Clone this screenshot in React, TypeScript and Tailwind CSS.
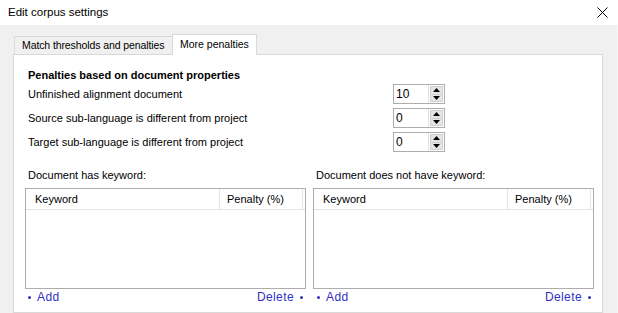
import React from "react";

function Spinner({ value }: { value: string }) {
  return (
    <div className="flex h-[20px] w-[52px] border border-[#adadad] bg-white">
      <div className="flex-1 pl-[2px] text-[12px] leading-[18px] text-black">{value}</div>
      <div className="flex w-[16px] flex-col border-l border-[#e0e0e0] p-[1px]">
        <div className="flex flex-1 items-center justify-center border border-[#d0d0d0] bg-[#e5e5e5]">
          <svg width="7" height="4" viewBox="0 0 7 4">
            <path d="M3.5 0 L7 4 L0 4 Z" fill="#000" />
          </svg>
        </div>
        <div className="flex flex-1 items-center justify-center border border-t-0 border-[#d0d0d0] bg-[#e5e5e5]">
          <svg width="7" height="4" viewBox="0 0 7 4">
            <path d="M0 0 L7 0 L3.5 4 Z" fill="#000" />
          </svg>
        </div>
      </div>
    </div>
  );
}

function KeywordList({ label, addPl }: { label: string; addPl: string }) {
  return (
    <div className="flex w-[281px] flex-col">
      <div className="ml-[3px] mt-[14px] h-[14px] whitespace-nowrap text-[11px] leading-[14px] text-black">{label}</div>
      <div className="mt-[6px] h-[101px] border border-[#adadad] bg-white">
        <div className="flex h-[21px] border-b border-[#e5e5e5] text-[11px] leading-[20px] text-black">
          <div className="w-[194px] border-r border-[#e5e5e5] pl-[9px]">Keyword</div>
          <div className="w-[83px] whitespace-nowrap border-r border-[#e5e5e5] pl-[7px]">Penalty (%)</div>
        </div>
      </div>
      <div className={`mt-[1px] flex h-[14px] items-center justify-between pr-[3px] text-[12px] tracking-[0.4px] text-[#3030c8] ${addPl}`}>
        <div className="flex items-center gap-[6px]">
          <span className="h-[3px] w-[3px] rounded-full bg-[#3030c8]" />
          <span>Add</span>
        </div>
        <div className="flex items-center gap-[6px]">
          <span>Delete</span>
          <span className="h-[3px] w-[3px] rounded-full bg-[#3030c8]" />
        </div>
      </div>
    </div>
  );
}

export default function App() {
  const rows = [
    ["Unfinished alignment document", "10"],
    ["Source sub-language is different from project", "0"],
    ["Target sub-language is different from project", "0"],
  ];
  return (
    <div
      className="flex h-[313px] w-[618px] flex-col overflow-hidden"
      style={{ fontFamily: '"Liberation Sans", Arial, sans-serif' }}
    >
      <div className="flex h-[25px] items-center justify-between bg-white pl-[8px] pr-[10px]">
        <span className="pt-[1px] text-[11.5px] text-black">Edit corpus settings</span>
        <svg width="11" height="11" viewBox="0 0 11 11">
          <path d="M0.5 0.5 L10.5 10.5 M10.5 0.5 L0.5 10.5" stroke="#000" strokeWidth="1" />
        </svg>
      </div>
      <div className="flex flex-1 flex-col border-r border-[#f8f8f8] bg-[#f0f0f0] pl-[13px] pr-[14px] pt-[9px]">
        <div className="flex h-[20px] items-end pl-[1px]">
          <div className="flex h-[18px] w-[158px] items-center overflow-hidden whitespace-nowrap border-l border-t border-[#d9d9d9] pl-[7px] text-[10.5px] tracking-[-0.1px] text-black">
            Match thresholds and penalties
          </div>
          <div className="relative z-10 -mb-[1px] flex h-[21px] w-[85px] items-center whitespace-nowrap border-l border-r border-t border-[#d9d9d9] bg-white pb-[1px] pl-[7px] text-[10.5px] text-black">
            More penalties
          </div>
        </div>
        <div className="flex-1 border border-[#d9d9d9] bg-white pl-[11px]">
          <div className="ml-[3px] mt-[13px] h-[14px] text-[11px] font-bold leading-[14px] text-black">
            Penalties based on document properties
          </div>
          {rows.map(([label, value]) => (
            <div key={label} className="ml-[3px] flex h-[24px] items-center">
              <div className="w-[365px] text-[11px] text-black">{label}</div>
              <Spinner value={value} />
            </div>
          ))}
          <div className="flex gap-[7px]">
            <KeywordList label="Document has keyword:" addPl="pl-[3px]" />
            <KeywordList label="Document does not have keyword:" addPl="pl-[4px]" />
          </div>
        </div>
      </div>
    </div>
  );
}
